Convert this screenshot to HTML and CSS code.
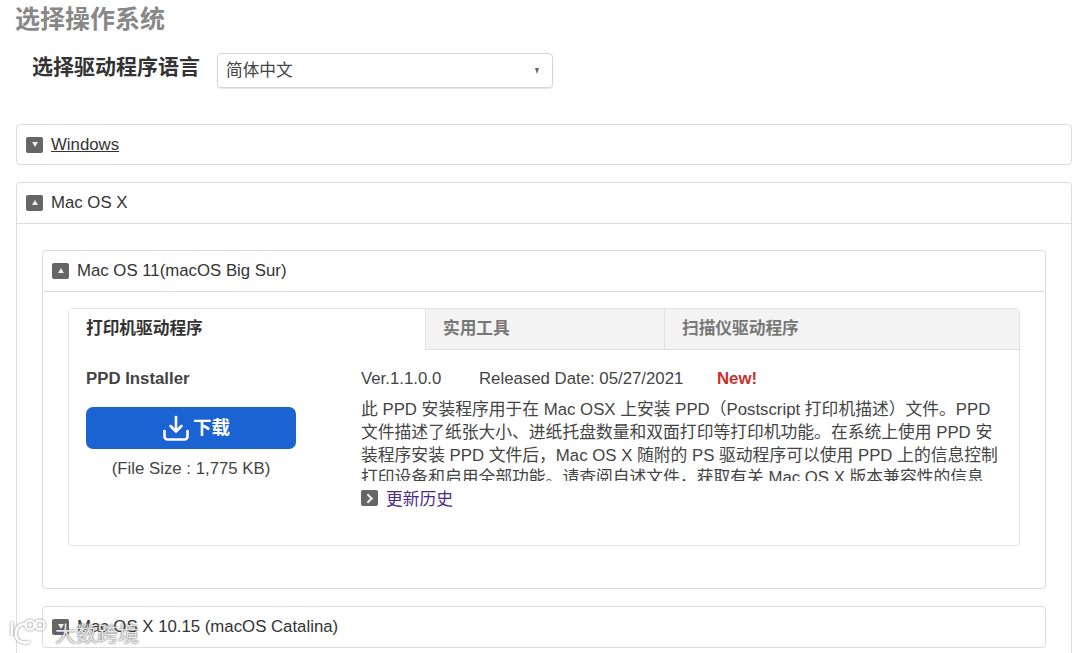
FILE: index.html
```html
<!DOCTYPE html>
<html lang="zh-CN">
<head>
<meta charset="utf-8">
<title>选择操作系统</title>
<link rel="stylesheet" href="styles.css">
</head>
<body>
<main class="page">
  <h1 class="title">选择操作系统</h1>
  <div class="lang-row">
    <label class="lang-label">选择驱动程序语言</label>
    <div class="select"><span>简体中文</span><span class="select-arrow"></span></div>
  </div>

  <section class="panel panel-windows">
    <div class="panel-head">
      <span class="toggle"><span class="tri tri-down"></span></span>
      <a class="os-link" href="#">Windows</a>
    </div>
  </section>

  <section class="panel panel-mac">
    <div class="panel-head">
      <span class="toggle"><span class="tri tri-up"></span></span>
      <span>Mac OS X</span>
    </div>
    <div class="panel-body">
      <section class="panel panel-inner">
        <div class="panel-head">
          <span class="toggle"><span class="tri tri-up"></span></span>
          <span>Mac OS 11(macOS Big Sur)</span>
        </div>
        <div class="inner-body">
          <div class="tabs-box">
            <div class="tabs">
              <div class="tab tab-active">打印机驱动程序</div>
              <div class="tab tab-tool">实用工具</div>
              <div class="tab tab-scan">扫描仪驱动程序</div>
            </div>
            <div class="driver">
              <div class="driver-left">
                <div class="driver-name">PPD Installer</div>
                <a class="download" href="#">
                  <svg class="dl-icon" viewBox="0 0 28 28" width="28" height="28" fill="none" stroke="#fff" stroke-width="2.6" stroke-linecap="round" stroke-linejoin="round">
                    <path d="M14 3v14"/>
                    <path d="M8.5 12l5.5 5.5 5.5-5.5"/>
                    <path d="M2.5 17v5.5a3 3 0 0 0 3 3h17a3 3 0 0 0 3-3V17"/>
                  </svg>
                  <span>下载</span>
                </a>
                <div class="file-size">(File Size : 1,775 KB)</div>
              </div>
              <div class="driver-right">
                <div class="meta">
                  <span class="ver">Ver.1.1.0.0</span>
                  <span class="date">Released Date: 05/27/2021</span>
                  <span class="new">New!</span>
                </div>
                <div class="desc">此 PPD 安装程序用于在 Mac OSX 上安装 PPD（Postscript 打印机描述）文件。PPD<br>文件描述了纸张大小、进纸托盘数量和双面打印等打印机功能。在系统上使用 PPD 安<br>装程序安装 PPD 文件后，Mac OS X 随附的 PS 驱动程序可以使用 PPD 上的信息控制<br>打印设备和启用全部功能。请查阅自述文件，获取有关 Mac OS X 版本兼容性的信息</div>
                <div class="history">
                  <span class="toggle"><span class="tri tri-right"></span></span>
                  <a class="history-link" href="#">更新历史</a>
                </div>
              </div>
            </div>
          </div>
        </div>
      </section>
      <section class="panel panel-next">
        <div class="panel-head">
          <span class="toggle"><span class="tri tri-down"></span></span>
          <span>Mac OS X 10.15 (macOS Catalina)</span>
        </div>
      </section>
    </div>
  </section>
</main>
<div class="watermark">
  <svg class="wm-logo" viewBox="0 0 40 28" width="40" height="28" fill="none" stroke="#fff" stroke-width="2.6" stroke-linecap="round">
    <path d="M4 5v11"/>
    <path d="M18 6C9 6 7 12 8 18c1 5 7 8 13 6"/>
    <circle cx="22" cy="7" r="4.5"/>
    <circle cx="32" cy="7" r="4.5"/>
  </svg>
  <span class="wm-text">大数跨境</span>
</div>
</body>
</html>
```
FILE: styles.css
```css
html, body {
  margin: 0;
  height: 653px;
  overflow: hidden;
  background: #fff;
}
body {
  position: relative;
  font-family: "Liberation Sans", "Noto Sans CJK SC", sans-serif;
  font-size: 16.8px;
  color: #333;
}
.page {
  box-sizing: border-box;
  height: 653px;
  overflow: hidden;
  padding: 5px 8px 0 16px;
}
.title {
  margin: 0 0 0 -1px;
  font-size: 25px;
  line-height: 28px;
  font-weight: 700;
  color: #888;
}
.lang-row {
  display: flex;
  align-items: center;
  gap: 17px;
  margin: 20px 0 36px 16px;
  height: 35px;
}
.lang-label {
  font-size: 21px;
  font-weight: 700;
  color: #333;
  position: relative;
  top: -6px;
}
.select {
  box-sizing: border-box;
  width: 336px;
  height: 35px;
  padding: 0 13px 0 8px;
  display: flex;
  align-items: center;
  justify-content: space-between;
  border: 1px solid #d6d6d6;
  border-radius: 4px;
  box-shadow: 0 1px 1px #e6e6e6;
  font-size: 16.7px;
  color: #444;
}
.select > span:first-child {
  position: relative;
  top: -2px;
}
.select-arrow {
  width: 0;
  height: 0;
  border-left: 2.5px solid transparent;
  border-right: 2.5px solid transparent;
  border-top: 6px solid #666;
}
.panel {
  border: 1px solid #dcdcdc;
  border-radius: 4px;
  background: #fff;
}
.panel-windows {
  height: 39px;
  margin-bottom: 17px;
}
.panel-head {
  height: 39px;
  padding: 0 0 1px 9px;
  box-sizing: content-box;
  display: flex;
  align-items: center;
  gap: 8px;
  color: #333;
  font-size: 16.8px;
}
.panel-mac {
  height: 600px;
}
.panel-mac > .panel-head,
.panel-inner > .panel-head {
  border-bottom: 1px solid #dcdcdc;
}
.panel-body {
  padding: 26px 25px 0 25px;
}
.panel-inner {
  height: 337px;
  margin-bottom: 17px;
}
.inner-body {
  padding: 16px 25px 0 25px;
}
.toggle {
  flex: none;
  width: 17px;
  height: 16px;
  border-radius: 2px;
  background: #666;
  display: flex;
  align-items: center;
  justify-content: center;
}
.tri {
  width: 0;
  height: 0;
  display: block;
}
.tri-down {
  border-left: 3px solid transparent;
  border-right: 3px solid transparent;
  border-top: 5px solid #eee;
}
.tri-up {
  border-left: 3px solid transparent;
  border-right: 3px solid transparent;
  border-bottom: 5px solid #eee;
}
.tri-right {
  width: 5px;
  height: 5px;
  border-top: 2px solid #eee;
  border-right: 2px solid #eee;
  transform: rotate(45deg) translate(-1px, 1px);
}
.os-link {
  color: #333;
  text-decoration: underline;
}
.tabs-box {
  box-sizing: border-box;
  height: 238px;
  border: 1px solid #e2e2e2;
  border-radius: 4px;
}
.tabs {
  display: flex;
  height: 41px;
  font-size: 16.7px;
  font-weight: 700;
}
.tab {
  box-sizing: border-box;
  padding-left: 17px;
  line-height: 40px;
  color: #777;
  background: #f3f3f3;
  border-bottom: 1px solid #dedede;
  border-left: 1px solid #e2e2e2;
}
.tab-active {
  width: 356px;
  background: #fff;
  color: #333;
  border: 0;
  padding-left: 17px;
}
.tab-tool {
  width: 239px;
}
.tab-scan {
  flex: 1;
  border-top-right-radius: 4px;
}
.driver {
  display: flex;
  padding: 19px 0 0 17px;
}
.driver-left {
  width: 275px;
  flex: none;
}
.driver-name {
  font-weight: 700;
  line-height: 20px;
  color: #444;
}
.download {
  box-sizing: border-box;
  width: 210px;
  height: 42px;
  margin-top: 18px;
  padding-left: 10px;
  display: flex;
  align-items: center;
  justify-content: center;
  gap: 3px;
  border-radius: 7px;
  background: #1b63d2;
  color: #fff;
  font-size: 18.5px;
  font-weight: 700;
  text-decoration: none;
}
.download span {
  position: relative;
  top: -2px;
}
.dl-icon {
  display: block;
}
.file-size {
  width: 210px;
  margin-top: 10px;
  text-align: center;
  color: #444;
  line-height: 20px;
}
.meta {
  display: flex;
  line-height: 20px;
  color: #444;
}
.ver {
  width: 118px;
}
.date {
  width: 238px;
}
.new {
  color: #c9302c;
  font-weight: 700;
}
.desc {
  margin-top: 10px;
  height: 82px;
  overflow: hidden;
  line-height: 22.8px;
  white-space: nowrap;
  color: #444;
}
.history {
  display: flex;
  align-items: center;
  gap: 8px;
  margin-top: 5px;
}
.history-link {
  color: #4b2a86;
  text-decoration: none;
}
.watermark {
  position: absolute;
  left: 8px;
  bottom: 7px;
  display: flex;
  align-items: flex-end;
  gap: 7px;
  font-size: 21px;
  line-height: 24px;
  color: rgba(255, 255, 255, 0.85);
  text-shadow: 0 0 2px rgba(70, 70, 70, 0.8), 0 0 1px rgba(70, 70, 70, 0.6);
}
.wm-logo {
  filter: drop-shadow(0 0 1px rgba(70, 70, 70, 0.7));
}
```
